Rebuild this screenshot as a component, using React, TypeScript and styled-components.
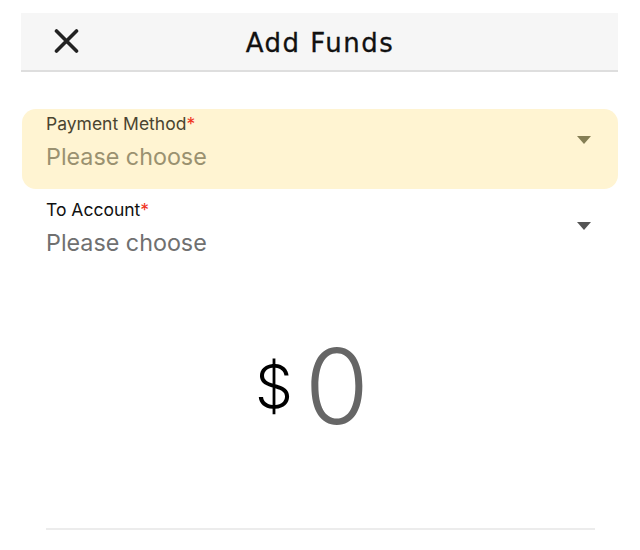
import styled, { createGlobalStyle } from 'styled-components';

const GlobalStyle = createGlobalStyle`
  html, body {
    margin: 0;
    padding: 0;
    background: #ffffff;
  }
  body {
    font-family: Inter, "Liberation Sans", sans-serif;
  }
`;

type FieldProps = {
  label: string;
  active?: boolean;
};

function SelectField({ label, active }: FieldProps) {
  return (
    <Field $active={active}>
      <FieldText>
        <Label $active={active}>
          {label}
          <Required>*</Required>
        </Label>
        <Placeholder $active={active}>Please choose</Placeholder>
      </FieldText>
      <Caret $active={active} width="14" height="8" viewBox="0 0 14 8">
        <polygon points="0,0 14,0 7,8" />
      </Caret>
    </Field>
  );
}

export default function App() {
  return (
    <Page>
      <GlobalStyle />
      <Header>
        <CloseButton aria-label="close">
          <svg width="25" height="24" viewBox="0 0 25 24">
            <path
              d="M2.5 2 L22.5 22 M22.5 2 L2.5 22"
              stroke="#222"
              strokeWidth="3.6"
              strokeLinecap="round"
            />
          </svg>
        </CloseButton>
        <Title>Add Funds</Title>
      </Header>
      <Form>
        <SelectField label="Payment Method" active />
        <SelectField label="To Account" />
      </Form>
      <Amount>
        <Currency>$</Currency>
        <Value>0</Value>
      </Amount>
      <Divider />
    </Page>
  );
}

const Page = styled.div`
  width: 640px;
  height: 550px;
  padding-top: 13px;
  box-sizing: border-box;
  overflow: hidden;
`;

const Header = styled.div`
  position: relative;
  display: flex;
  align-items: center;
  justify-content: center;
  height: 57px;
  margin: 0 22px 0 21px;
  background: #f6f6f6;
  border-bottom: 2px solid #dedede;
`;

const CloseButton = styled.div`
  position: absolute;
  left: 33px;
  top: 16px;
  display: flex;
`;

const Title = styled.h1`
  margin: 0;
  padding: 2px 0 0 1px;
  font-family: "DejaVu Sans", sans-serif;
  font-size: 26px;
  font-weight: 400;
  letter-spacing: 1.5px;
  -webkit-text-stroke: 0.3px #111;
  color: #111;
`;

const Form = styled.div`
  display: flex;
  flex-direction: column;
  gap: 6px;
  margin: 37px 22px 0 22px;
`;

const Field = styled.div<{ $active?: boolean }>`
  display: flex;
  align-items: flex-start;
  justify-content: space-between;
  height: 80px;
  box-sizing: border-box;
  padding: 4px 27px 0 24px;
  border-radius: 14px;
  background: ${({ $active }) => ($active ? '#fff4d2' : 'transparent')};
`;

const FieldText = styled.div`
  display: flex;
  flex-direction: column;
`;

const Label = styled.div<{ $active?: boolean }>`
  font-size: 17.5px;
  line-height: 22px;
  color: ${({ $active }) => ($active ? '#4a4430' : '#111')};
`;

const Required = styled.span`
  color: #f0331f;
`;

const Placeholder = styled.div<{ $active?: boolean }>`
  margin-top: 8px;
  font-size: 23.3px;
  line-height: 28px;
  color: ${({ $active }) => ($active ? '#9a9170' : '#707070')};
`;

const Caret = styled.svg<{ $active?: boolean }>`
  margin-top: 23px;
  fill: ${({ $active }) => ($active ? '#857e55' : '#555')};
`;

const Amount = styled.div`
  display: flex;
  align-items: center;
  justify-content: center;
  gap: 12px;
  height: 120px;
  margin-top: 51px;
  padding-right: 16px;
`;

const Currency = styled.span`
  font-size: 60px;
  font-weight: 300;
  color: #000;
`;

const Value = styled.span`
  font-size: 104px;
  font-weight: 300;
  line-height: 120px;
  color: #666;
`;

const Divider = styled.div`
  height: 2px;
  margin: 82px 45px 0 46px;
  background: #ececec;
`;
